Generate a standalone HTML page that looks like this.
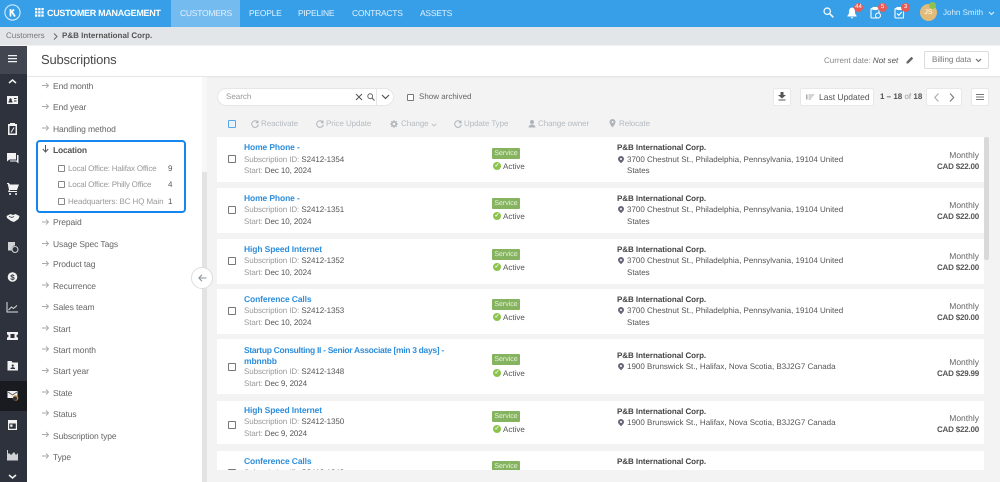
<!DOCTYPE html>
<html><head><meta charset="utf-8">
<style>
*{box-sizing:border-box;margin:0;padding:0}
html,body{width:1000px;height:482px;overflow:hidden;background:#f3f3f3;font-family:"Liberation Sans",sans-serif;text-rendering:geometricPrecision}
.a{position:absolute;white-space:nowrap}
.t{position:absolute;white-space:nowrap;font-size:8px;line-height:12px;color:#666}
.f{position:absolute;left:53px;white-space:nowrap;font-size:8.5px;letter-spacing:-.1px;line-height:12px;color:#666}
.nav{position:absolute;top:6px;color:#e4f1fc;font-size:8.5px;letter-spacing:-.25px;line-height:14px;white-space:nowrap}
svg{position:absolute;overflow:visible}
.cb{position:absolute;width:8px;height:8px;border:1.3px solid #777;border-radius:1px;background:#fff}
.tt{position:absolute;left:27px;color:#2f8fdc;font-size:8.5px;font-weight:bold;letter-spacing:-.12px;line-height:11px;white-space:nowrap}
.l{position:absolute;left:27px;font-size:8px;letter-spacing:-.08px;line-height:11px;color:#999;white-space:nowrap}
.l b{font-weight:normal;color:#555}
.badge{position:absolute;left:275px;width:28px;height:11px;background:#86b35f;color:#e8f3df;font-size:7px;line-height:11px;text-align:center;border-radius:1px}
.ok{position:absolute;left:276px;width:8px;height:8px;border-radius:50%;background:#8cc34f;color:#fff;font-size:6px;line-height:8px;text-align:center;font-weight:bold}
.act{position:absolute;left:286px;font-size:8px;line-height:12px;color:#555}
.co{position:absolute;left:400px;font-size:8px;font-weight:bold;letter-spacing:-.05px;line-height:12px;color:#444;white-space:nowrap}
.ad{position:absolute;left:410px;font-size:8px;line-height:11px;color:#555;white-space:nowrap}
.pin{position:absolute;left:401px;width:6px;height:6px;border-radius:50% 50% 50% 0;transform:rotate(-45deg);background:#667}
.pin:after{content:"";position:absolute;left:2px;top:2px;width:2px;height:2px;border-radius:50%;background:#fff}
.mo{position:absolute;right:5px;font-size:8.5px;line-height:12px;color:#666;white-space:nowrap}
.pr{position:absolute;right:5px;font-size:8px;font-weight:bold;letter-spacing:-.2px;line-height:12px;color:#555;white-space:nowrap}
.btn{position:absolute;background:#fff;border:1px solid #e8e8e8;border-radius:2px}
.ac{position:absolute;top:118px;font-size:8px;letter-spacing:-.08px;line-height:12px;color:#b5bbc0;white-space:nowrap}
.p{position:absolute;left:0;width:767px;background:#fff}
</style></head><body>

<!-- top bar -->
<div class="a" style="left:0;top:0;width:1000px;height:27px;background:#369fe8"></div>
<div class="a" style="left:171px;top:0;width:69px;height:27px;background:#74bbf0"></div>
<svg style="left:4px;top:4px" width="18" height="18" viewBox="0 0 18 18"><circle cx="8.500" cy="8.500" r="7.600" fill="none" stroke="#e6f3fd" stroke-width="1"/><path d="M6.500 5v7.500M6.500 9l3.500-3.500M8 8l3 4.500" stroke="#fff" stroke-width="1.700" fill="none"/></svg>
<svg style="left:35px;top:8px" width="9" height="9" viewBox="0 0 9 9" fill="#fff"><rect width="2.300" height="2.300"/><rect x="3.200" width="2.300" height="2.300"/><rect x="6.400" width="2.300" height="2.300"/><rect y="3.200" width="2.300" height="2.300"/><rect x="3.200" y="3.200" width="2.300" height="2.300"/><rect x="6.400" y="3.200" width="2.300" height="2.300"/><rect y="6.400" width="2.300" height="2.300"/><rect x="3.200" y="6.400" width="2.300" height="2.300"/><rect x="6.400" y="6.400" width="2.300" height="2.300"/></svg>
<div class="nav" style="left:47px;color:#fff;font-weight:bold;font-size:9px;letter-spacing:-.3px">CUSTOMER MANAGEMENT</div>
<div class="nav" style="left:180px">CUSTOMERS</div>
<div class="nav" style="left:249px">PEOPLE</div>
<div class="nav" style="left:298px">PIPELINE</div>
<div class="nav" style="left:352px">CONTRACTS</div>
<div class="nav" style="left:420px">ASSETS</div>

<svg style="left:823px;top:7px" width="11" height="11" viewBox="0 0 11 11"><circle cx="4.200" cy="4.200" r="3.200" fill="none" stroke="#fff" stroke-width="1.200"/><path d="M6.800 6.800l3.500 3.500" stroke="#fff" stroke-width="1.500"/></svg>
<svg style="left:847px;top:7px" width="10" height="12" viewBox="0 0 10 12" fill="#fff"><path d="M5 .5C2.600 .8 2 2.800 2 5c0 2-.8 3-1.600 3.800v.7h9.200v-.7C8.800 8 8 7 8 5c0-2.200-.6-4.200-3-4.500zM3.800 10.300h2.400a1.200 1.200 0 0 1-2.400 0z"/></svg>
<div class="a" style="left:854px;top:3px;width:9px;height:9px;border-radius:50%;background:#ea5a55;color:#fff;font-size:6px;line-height:9px;text-align:center">44</div>
<svg style="left:870px;top:7px" width="12" height="12" viewBox="0 0 12 12" fill="none" stroke="#fff" stroke-width="1.100"><rect x="1" y="1.500" width="8" height="9.500" rx=".8"/><rect x="3" y=".5" width="4" height="2" fill="#fff"/><circle cx="8" cy="8.500" r="2.500" fill="#369fe8"/></svg>
<div class="a" style="left:878px;top:3px;width:9px;height:9px;border-radius:50%;background:#ea5a55;color:#fff;font-size:6px;line-height:9px;text-align:center">5</div>
<svg style="left:894px;top:7px" width="11" height="12" viewBox="0 0 11 12" fill="none" stroke="#fff" stroke-width="1.100"><rect x="1" y="1.500" width="8.500" height="9.500" rx=".8"/><rect x="3" y=".5" width="4.500" height="2" fill="#fff"/><path d="M3 6.500l1.800 1.800 3-3.300"/></svg>
<div class="a" style="left:901px;top:3px;width:9px;height:9px;border-radius:50%;background:#ea5a55;color:#fff;font-size:6px;line-height:9px;text-align:center">3</div>
<div class="a" style="left:920px;top:4px;width:17px;height:17px;border-radius:50%;background:#e3bb78;color:#fff;font-size:7px;line-height:17px;text-align:center">JS</div>
<div class="a" style="left:929px;top:2px;width:7px;height:7px;border-radius:50%;background:#8cc34f"></div>
<div class="nav" style="left:943px;top:6px;font-size:8px;letter-spacing:0;color:#d9edfb">John Smith</div>
<svg style="left:988px;top:11px" width="7" height="5" viewBox="0 0 7 5"><path d="M1 1l2.500 2.500L6 1" fill="none" stroke="#e4f1fc" stroke-width="1.100"/></svg>

<!-- breadcrumb -->
<div class="a" style="left:0;top:27px;width:1000px;height:18px;background:#e3e6e9"></div>
<div class="t" style="left:6px;top:30px;color:#777">Customers</div>
<svg style="left:53px;top:33px" width="5" height="7" viewBox="0 0 5 7"><path d="M1 .5l3 3-3 3" fill="none" stroke="#666" stroke-width="1"/></svg>
<div class="t" style="left:62px;top:30px;color:#555;font-weight:bold">P&amp;B International Corp.</div>

<!-- header -->
<div class="a" style="left:27px;top:46px;width:973px;height:30px;background:#fff;box-shadow:0 1px 2px #e0e0e0"></div>
<div class="a" style="left:41px;top:51px;font-size:13px;line-height:17px;color:#4a4a4a;letter-spacing:-.2px">Subscriptions</div>
<div class="t" style="left:824px;top:55px;color:#888">Current date: <i style="color:#555">Not set</i></div>
<svg style="left:906px;top:56px" width="8" height="8" viewBox="0 0 8 8"><path d="M.5 7.500V5.800L5.500 .8l1.700 1.700-5 5z" fill="#666"/></svg>
<div class="btn" style="left:924px;top:51px;width:65px;height:18px;border-color:#dcdcdc"></div>
<div class="t" style="left:932px;top:54px;color:#777">Billing data</div>
<svg style="left:975px;top:58px" width="7" height="5" viewBox="0 0 7 5"><path d="M1 1l2.500 2.500L6 1" fill="none" stroke="#666" stroke-width="1.100"/></svg>

<!-- sidebar -->
<div class="a" style="left:0;top:46px;width:27px;height:436px;background:#2d323c"></div>
<div class="a" style="left:0;top:46px;width:27px;height:28px;background:#414650"></div>
<div class="a" style="left:0;top:381px;width:27px;height:30px;background:#191b20"></div>
<svg style="left:0;top:0" width="27" height="482" viewBox="0 0 27 482" fill="#f2f2f2">
<path d="M8 55h9v1.300H8zM8 58h9v1.300H8zM8 61h9v1.300H8z"/>
<path d="M9 83l3.500-3 3.500 3" fill="none" stroke="#f2f2f2" stroke-width="1.500"/>
<path fill-rule="evenodd" d="M7 96h11v8H7zM8.500 102.500h4c0-1.500-.8-2-1-2a1.300 1.300 0 1 0-2 0c-.2 0-1 .5-1 2zM14 98v1h2.500v-1zM14 100.500v1h2.500v-1z"/>
<path fill-rule="evenodd" d="M8 124h2v-1h5v1h2v11H8zM9.500 126v7.500h6V126z"/><path d="M11 132.500l3-5" stroke="#f2f2f2" stroke-width="1"/>
<path d="M7 153h9v6.500H9.500L7 161.500zM17 155h1.500v8.500l-2.200-2H10v-1h7z"/>
<path d="M7 183h2l.8 1.500H19l-2 5.500H10l-.5 1H17v1H8l1-2.300L7.800 184H7zM10 193a1 1 0 1 0 .1 0zM16 193a1 1 0 1 0 .1 0z"/>
<path d="M6.500 216l4-2 2.500 1 2.500-1 4 2-1 3-4.500 3-3-1-4-3z"/><path d="M9 216.500l3 1 2-1" fill="none" stroke="#2d323c" stroke-width=".8"/>
<path fill="#d0d2d5" d="M8 242h7v3.500a3.500 3.500 0 0 0-3 5H8z"/><circle cx="15" cy="249.500" r="3" fill="none" stroke="#d0d2d5" stroke-width="1.100"/>
<circle cx="12.500" cy="277" r="4.800"/><text x="12.500" y="280" font-size="8" font-weight="bold" text-anchor="middle" fill="#2d323c" font-family="Liberation Sans">$</text>
<path d="M7 302v10h11M8.500 310l3-3 2 1.500 3.500-3" fill="none" stroke="#e0e0e0" stroke-width="1"/>
<path fill-rule="evenodd" d="M7 332h11v2.500a1.500 1.500 0 0 0 0 3V340H7v-2.500a1.500 1.500 0 0 0 0-3zM10.500 334v4h4v-4z"/>
<path fill-rule="evenodd" d="M7.500 361h4l1 1.500h5.500v8H7.500zM12.700 364.500a1.100 1.100 0 1 0 .1 0zM10.500 369h4.500v-1l-2.200-1-2.300 1z"/>
<path d="M7.500 391h10v7H7.500z"/><path d="M8 392l4.500 3 4.500-3" fill="none" stroke="#555" stroke-width=".8"/><circle cx="15.500" cy="398" r="2.800" fill="#d8963c"/><circle cx="15" cy="398.500" r="2" fill="#333"/>
<path fill-rule="evenodd" d="M8 420h9v10H8zM9.200 423.500v5.300h6.600v-5.300zM10.200 424.500h2.300v2.300h-2.300z"/>
<path fill="#cfd1d4" d="M7 450v10.500h11v-7.500l-2 2-2-3-3 3-2-2-1 1v-4z"/>
<path d="M9 475l3.500 3 3.500-3" fill="none" stroke="#f2f2f2" stroke-width="1.500"/>
</svg>

<!-- filter panel -->
<div class="a" style="left:27px;top:77px;width:175px;height:405px;background:#fff"></div>
<div class="a" style="left:202px;top:77px;width:5px;height:405px;background:#f7f7f7"></div>
<div class="a" style="left:202px;top:172px;width:5px;height:310px;background:#e3e3e3"></div>
<div class="f" style="top:79.500px">End month</div>
<div class="f" style="top:100.500px">End year</div>
<div class="f" style="top:122.500px">Handling method</div>
<div class="a" style="left:36px;top:140px;width:150px;height:73px;border:2px solid #1586ee;border-radius:4px"></div>
<div class="f" style="top:144px;color:#555;font-weight:bold;letter-spacing:-.2px">Location</div>
<svg style="left:42px;top:145px" width="7" height="8" viewBox="0 0 7 8"><path d="M3.500 0v7M.8 4l2.700 3 2.700-3" fill="none" stroke="#555" stroke-width="1"/></svg>
<div class="cb" style="left:58px;top:165px;width:7px;height:7px;border-color:#888"></div>
<div class="t" style="left:68px;top:163px;color:#999;letter-spacing:-.2px">Local Office: Halifax Office</div>
<div class="t" style="left:168px;top:163px;color:#555">9</div>
<div class="cb" style="left:58px;top:181px;width:7px;height:7px;border-color:#888"></div>
<div class="t" style="left:68px;top:179px;color:#999;letter-spacing:-.2px">Local Office: Philly Office</div>
<div class="t" style="left:168px;top:179px;color:#555">4</div>
<div class="cb" style="left:58px;top:198px;width:7px;height:7px;border-color:#888"></div>
<div class="t" style="left:68px;top:196px;color:#999;letter-spacing:-.1px">Headquarters: BC HQ Main</div>
<div class="t" style="left:168px;top:196px;color:#555">1</div>
<div class="f" style="top:216px">Prepaid</div>
<div class="f" style="top:238px">Usage Spec Tags</div>
<div class="f" style="top:258px">Product tag</div>
<div class="f" style="top:280px">Recurrence</div>
<div class="f" style="top:301px">Sales team</div>
<div class="f" style="top:323px">Start</div>
<div class="f" style="top:344px">Start month</div>
<div class="f" style="top:365px">Start year</div>
<div class="f" style="top:387px">State</div>
<div class="f" style="top:408px">Status</div>
<div class="f" style="top:430px">Subscription type</div>
<div class="f" style="top:451px">Type</div>
<svg style="left:42px;top:0" width="8" height="482" viewBox="0 0 8 482" fill="none" stroke="#aaa" stroke-width=".9">
<path d="M0 85.500h6.500M4 83l2.500 2.500L4 88M0 106.500h6.500M4 104l2.500 2.500L4 109M0 128h6.500M4 125.500l2.500 2.500L4 130.500M0 222h6.500M4 219.500l2.500 2.500L4 224.500M0 243.500h6.500M4 241l2.500 2.500L4 246M0 263.500h6.500M4 261l2.500 2.500L4 266M0 285h6.500M4 282.500l2.500 2.500L4 287.500M0 306.500h6.500M4 304l2.500 2.500L4 309M0 328h6.500M4 325.500l2.500 2.500L4 330.500M0 349h6.500M4 346.500l2.500 2.500L4 351.500M0 370.500h6.500M4 368l2.500 2.500L4 373M0 392h6.500M4 389.500l2.500 2.500L4 394.500M0 413h6.500M4 410.500l2.500 2.500L4 415.500M0 434.500h6.500M4 432l2.500 2.500L4 437M0 456h6.500M4 453.500l2.500 2.500L4 458.500"/>
</svg>
<div class="a" style="left:191px;top:267px;width:22px;height:22px;border-radius:50%;background:#fff;border:1px solid #ddd"></div>
<svg style="left:198px;top:274px" width="9" height="8" viewBox="0 0 9 8"><path d="M8.500 4H1M4 .8L.9 4 4 7.200" fill="none" stroke="#8a9199" stroke-width="1.100"/></svg>

<!-- toolbar -->
<div class="a" style="left:217px;top:88px;width:177px;height:18px;background:#fff;border:1px solid #e6e6e6;border-radius:9px"></div>
<div class="t" style="left:226px;top:91px;color:#999">Search</div>
<svg style="left:355px;top:93px" width="8" height="8" viewBox="0 0 8 8"><path d="M1 1l6 6M7 1L1 7" stroke="#555" stroke-width="1"/></svg>
<svg style="left:367px;top:93px" width="8" height="8" viewBox="0 0 8 8"><circle cx="3.200" cy="3.200" r="2.400" fill="none" stroke="#666"/><path d="M5 5l2.500 2.500" stroke="#666" stroke-width="1.200"/></svg>
<div class="a" style="left:376px;top:89px;width:1px;height:16px;background:#e6e6e6"></div>
<svg style="left:381px;top:94px" width="9" height="6" viewBox="0 0 9 6"><path d="M1 1l3.500 3.500L8 1" fill="none" stroke="#555" stroke-width="1.200"/></svg>
<div class="cb" style="left:407px;top:94px;width:7px;height:7px"></div>
<div class="t" style="left:419px;top:91px;color:#666">Show archived</div>
<div class="btn" style="left:773px;top:88px;width:18px;height:18px"></div>
<svg style="left:778px;top:92px" width="8" height="9" viewBox="0 0 8 9"><path d="M2.500 0h3v3H8L4 6.500 0 3h2.500zM.5 7.500h7v1h-7z" fill="#555"/></svg>
<div class="btn" style="left:800px;top:88px;width:74px;height:18px"></div>
<svg style="left:806px;top:94px" width="8" height="6" viewBox="0 0 8 6"><path d="M0 .5h1.500v5H0zM2.500 .5H8v1H2.500zM2.500 2.500H6.500v1H2.500zM2.500 4.500H5v1H2.500z" fill="#aaa"/></svg>
<div class="t" style="left:819px;top:91px;color:#555;font-size:8.500px">Last Updated</div>
<div class="t" style="left:880px;top:91px;color:#555;font-weight:bold">1 – 18 <span style="font-weight:normal;color:#999">of</span> 18</div>
<div class="btn" style="left:926px;top:88px;width:36px;height:18px"></div>
<svg style="left:934px;top:93px" width="25" height="9" viewBox="0 0 25 9"><path d="M4.500 .5L.8 4.500l3.700 4" fill="none" stroke="#aaa" stroke-width="1.100"/><path d="M16 .5l3.700 4-3.700 4" fill="none" stroke="#777" stroke-width="1.100"/></svg>
<div class="btn" style="left:971px;top:88px;width:18px;height:18px"></div>
<svg style="left:976px;top:94px" width="8" height="6" viewBox="0 0 8 6"><path d="M0 0h8v1H0zM0 2.500h8v1H0zM0 5h8v1H0z" fill="#777"/></svg>

<!-- action bar -->
<div class="a" style="left:228px;top:120px;width:8px;height:8px;border:1.300px solid #5aa7e8;border-radius:1px;background:#eaf3fb"></div>
<svg style="left:251px;top:120px" width="8" height="8" viewBox="0 0 8 8" fill="none" stroke="#aeb4ba" stroke-width="1"><path d="M6.800 2.300A3.300 3.300 0 1 0 7.300 4.500M7 .5V2.700H4.800"/></svg>
<div class="ac" style="left:261px">Reactivate</div>
<svg style="left:316px;top:120px" width="8" height="8" viewBox="0 0 8 8" fill="none" stroke="#aeb4ba" stroke-width="1"><path d="M6.800 2.300A3.300 3.300 0 1 0 7.300 4.500M7 .5V2.700H4.800"/></svg>
<div class="ac" style="left:326px">Price Update</div>
<svg style="left:390px;top:120px" width="8" height="8" viewBox="0 0 8 8"><circle cx="4" cy="4" r="2.200" fill="none" stroke="#aeb4ba" stroke-width="1.600"/><path d="M4 0v8M0 4h8M1.200 1.200l5.600 5.600M6.800 1.200L1.200 6.800" stroke="#aeb4ba" stroke-width=".9" stroke-dasharray="1.500 5"/></svg>
<div class="ac" style="left:401px">Change</div>
<svg style="left:431px;top:123px" width="6" height="4" viewBox="0 0 6 4"><path d="M.7 .7L3 3l2.300-2.300" fill="none" stroke="#b5bbc0" stroke-width=".8"/></svg>
<svg style="left:454px;top:120px" width="8" height="8" viewBox="0 0 8 8" fill="none" stroke="#aeb4ba" stroke-width="1"><path d="M6.800 2.300A3.300 3.300 0 1 0 7.300 4.500M7 .5V2.700H4.800"/></svg>
<div class="ac" style="left:464px">Update Type</div>
<svg style="left:528px;top:120px" width="8" height="8" viewBox="0 0 8 8" fill="#aeb4ba"><circle cx="4" cy="2" r="2"/><path d="M.5 7.500C.8 5 2.500 4.500 4 4.500S7.200 5 7.500 7.500z"/></svg>
<div class="ac" style="left:538px">Change owner</div>
<svg style="left:609px;top:119px" width="7" height="9" viewBox="0 0 7 9"><path fill-rule="evenodd" fill="#aeb4ba" d="M3.500 0a3 3 0 0 1 3 3c0 2-3 5.500-3 5.500S.5 5 .5 3a3 3 0 0 1 3-3zm0 2a1 1 0 1 0 .1 0z"/></svg>
<div class="ac" style="left:619px">Relocate</div>

<!-- list -->
<div class="a" style="left:217px;top:137px;width:771px;height:333px;overflow:hidden">

<div class="p" style="top:0;height:45px">
<div class="cb" style="left:11px;top:18px"></div>
<div class="tt" style="top:5px">Home Phone -</div>
<div class="l" style="top:17px">Subscription ID: <b>S2412-1354</b></div>
<div class="l" style="top:28px">Start: <b>Dec 10, 2024</b></div>
<div class="badge" style="top:11px">Service</div><div class="ok" style="top:25px">✓</div><div class="act" style="top:24px">Active</div>
<div class="co" style="top:5px">P&amp;B International Corp.</div><div class="pin" style="top:19px"></div>
<div class="ad" style="top:17px">3700 Chestnut St., Philadelphia, Pennsylvania, 19104 United</div><div class="ad" style="top:28px">States</div>
<div class="mo" style="top:12px">Monthly</div><div class="pr" style="top:24px">CAD $22.00</div>
</div>

<div class="p" style="top:51px;height:45px">
<div class="cb" style="left:11px;top:18px"></div>
<div class="tt" style="top:5px">Home Phone -</div>
<div class="l" style="top:16px">Subscription ID: <b>S2412-1351</b></div>
<div class="l" style="top:28px">Start: <b>Dec 10, 2024</b></div>
<div class="badge" style="top:10px">Service</div><div class="ok" style="top:24px">✓</div><div class="act" style="top:23px">Active</div>
<div class="co" style="top:5px">P&amp;B International Corp.</div><div class="pin" style="top:18px"></div>
<div class="ad" style="top:16px">3700 Chestnut St., Philadelphia, Pennsylvania, 19104 United</div><div class="ad" style="top:28px">States</div>
<div class="mo" style="top:11px">Monthly</div><div class="pr" style="top:23px">CAD $22.00</div>
</div>

<div class="p" style="top:102px;height:45px">
<div class="cb" style="left:11px;top:18px"></div>
<div class="tt" style="top:5px">High Speed Internet</div>
<div class="l" style="top:16px">Subscription ID: <b>S2412-1352</b></div>
<div class="l" style="top:28px">Start: <b>Dec 10, 2024</b></div>
<div class="badge" style="top:10px">Service</div><div class="ok" style="top:24px">✓</div><div class="act" style="top:23px">Active</div>
<div class="co" style="top:5px">P&amp;B International Corp.</div><div class="pin" style="top:18px"></div>
<div class="ad" style="top:16px">3700 Chestnut St., Philadelphia, Pennsylvania, 19104 United</div><div class="ad" style="top:28px">States</div>
<div class="mo" style="top:11px">Monthly</div><div class="pr" style="top:23px">CAD $22.00</div>
</div>

<div class="p" style="top:152px;height:45px">
<div class="cb" style="left:11px;top:18px"></div>
<div class="tt" style="top:5px">Conference Calls</div>
<div class="l" style="top:16px">Subscription ID: <b>S2412-1353</b></div>
<div class="l" style="top:28px">Start: <b>Dec 10, 2024</b></div>
<div class="badge" style="top:10px">Service</div><div class="ok" style="top:24px">✓</div><div class="act" style="top:23px">Active</div>
<div class="co" style="top:5px">P&amp;B International Corp.</div><div class="pin" style="top:18px"></div>
<div class="ad" style="top:16px">3700 Chestnut St., Philadelphia, Pennsylvania, 19104 United</div><div class="ad" style="top:28px">States</div>
<div class="mo" style="top:11px">Monthly</div><div class="pr" style="top:23px">CAD $20.00</div>
</div>

<div class="p" style="top:202px;height:55px">
<div class="cb" style="left:11px;top:24px"></div>
<div class="tt" style="top:6px;letter-spacing:-.31px">Startup Consulting II - Senior Associate [min 3 days] -</div>
<div class="tt" style="top:17px">mbnnbb</div>
<div class="l" style="top:27px">Subscription ID: <b>S2412-1348</b></div>
<div class="l" style="top:39px">Start: <b>Dec 9, 2024</b></div>
<div class="badge" style="top:15px">Service</div><div class="ok" style="top:30px">✓</div><div class="act" style="top:29px">Active</div>
<div class="co" style="top:11px">P&amp;B International Corp.</div><div class="pin" style="top:24px"></div>
<div class="ad" style="top:22px">1900 Brunswick St., Halifax, Nova Scotia, B3J2G7 Canada</div>
<div class="mo" style="top:17px">Monthly</div><div class="pr" style="top:29px">CAD $29.99</div>
</div>

<div class="p" style="top:264px;height:43px">
<div class="cb" style="left:11px;top:20px"></div>
<div class="tt" style="top:4px">High Speed Internet</div>
<div class="l" style="top:15px">Subscription ID: <b>S2412-1350</b></div>
<div class="l" style="top:27px">Start: <b>Dec 9, 2024</b></div>
<div class="badge" style="top:10px">Service</div><div class="ok" style="top:24px">✓</div><div class="act" style="top:23px">Active</div>
<div class="co" style="top:5px">P&amp;B International Corp.</div><div class="pin" style="top:18px"></div>
<div class="ad" style="top:16px">1900 Brunswick St., Halifax, Nova Scotia, B3J2G7 Canada</div>
<div class="mo" style="top:11px">Monthly</div><div class="pr" style="top:23px">CAD $22.00</div>
</div>

<div class="p" style="top:314px;height:30px">
<div class="cb" style="left:11px;top:18px"></div>
<div class="tt" style="top:5px">Conference Calls</div>
<div class="l" style="top:16px">Subscription ID: <b>S2412-1349</b></div>
<div class="badge" style="top:10px">Service</div>
<div class="co" style="top:5px">P&amp;B International Corp.</div>
</div>
</div>
<div class="a" style="left:984px;top:137px;width:5px;height:123px;background:#d9d9d9;border-radius:2px"></div>
</body></html>
